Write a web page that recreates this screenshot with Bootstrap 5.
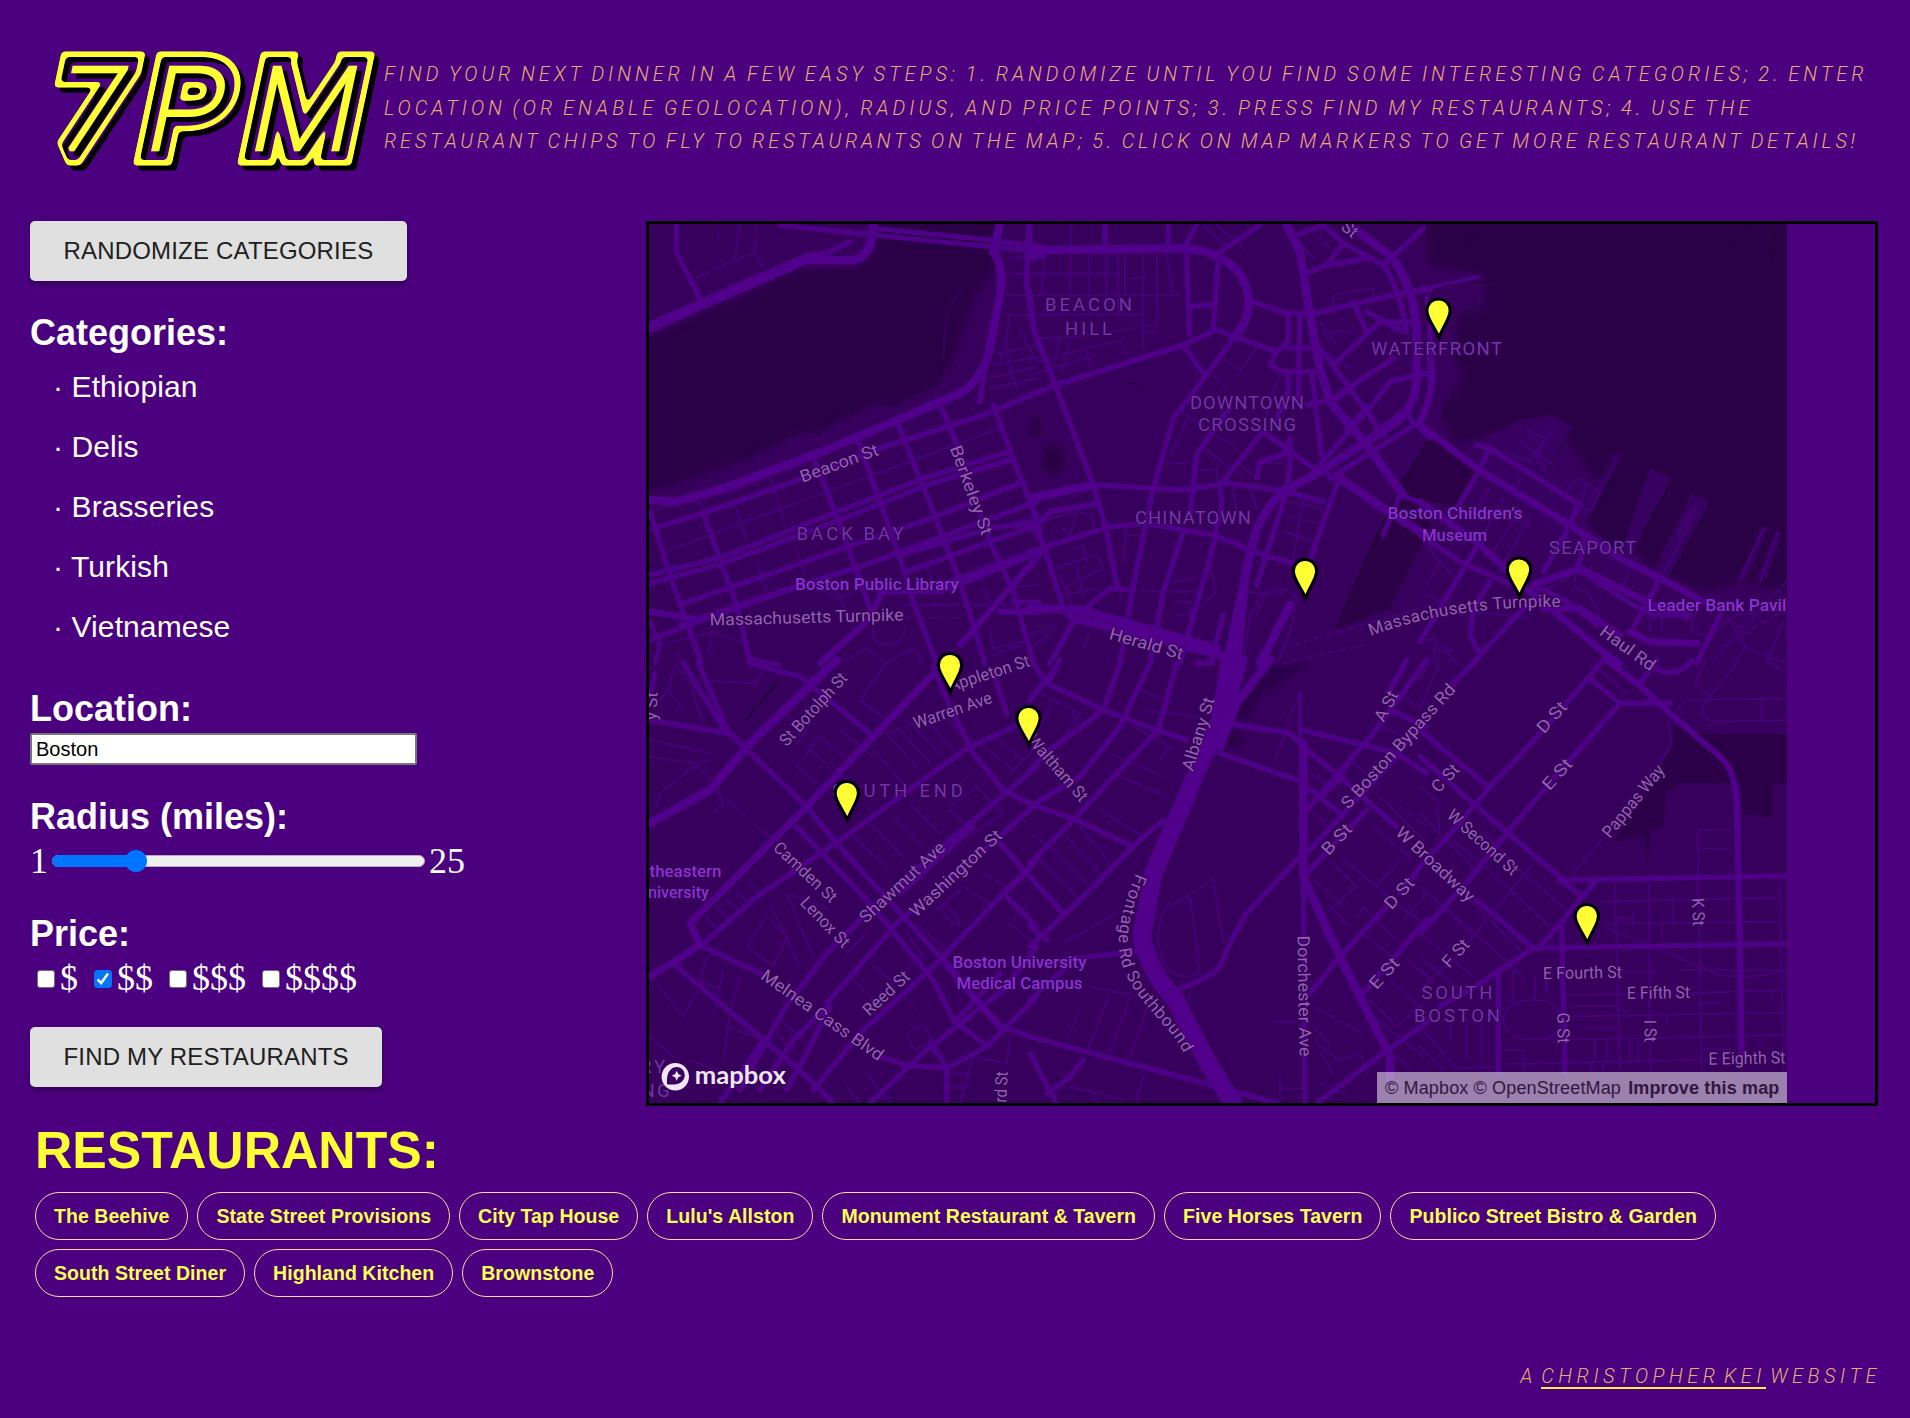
<!DOCTYPE html>
<html lang="en">
<head>
<meta charset="utf-8">
<meta name="viewport" content="width=device-width, initial-scale=1">
<title>7PM</title>
<link href="https://cdn.jsdelivr.net/npm/bootstrap@5.3.0/dist/css/bootstrap.min.css" rel="stylesheet">
<style>
body{background:#4b007f;color:#fff;font-family:"Liberation Sans",Arial,sans-serif;min-height:1418px;overflow-x:hidden}
.topbar{height:221px;padding:30px 30px 0 34px}
.logo7{width:350px;height:150px;flex:none}
.intro{padding-top:28px;font:italic 300 20px/33.5px Roboto,sans-serif;color:#e3ae76;white-space:nowrap;text-transform:uppercase;word-spacing:-2px}
.l1{letter-spacing:3.93px}.l2{letter-spacing:3.99px}.l3{letter-spacing:3.74px}
.main-row{padding:0 32px 0 30px;height:885px}
.side{width:616px;flex:none}
.btn-mui{--bs-btn-bg:#e0e0e0;--bs-btn-color:#212121;--bs-btn-hover-bg:#d5d5d5;height:60px;border:0;border-radius:5px;padding:0 33.5px;font-size:24px;letter-spacing:.18px;line-height:60px;box-shadow:0 3px 6px rgba(0,0,0,.35);text-transform:uppercase;white-space:nowrap}
.side h2{font-size:36px;line-height:42px;font-weight:700;margin:0}
.cats{font-size:30px;line-height:60px;letter-spacing:.1px;padding-left:23px;margin:0}
.loc{width:387px;height:32px;border:2px solid #767676;border-radius:2px;background:#fff;color:#000;font-size:20px;padding:0 4px}
.serif{font-family:"Liberation Serif","Times New Roman",serif;font-size:36px;line-height:42px}
.slider{width:373px;height:22px;margin:0 4px}
.box{appearance:none;width:18px;height:18px;border:1.5px solid #767676;border-radius:3px;background:#fff;margin:2px 5px 0 0;flex:none}
.box:checked{background:#0075ff;border-color:#0075ff;background-image:url("data:image/svg+xml,%3Csvg xmlns='http://www.w3.org/2000/svg' viewBox='0 0 18 18'%3E%3Cpath d='M3.6 9.5 7.2 13 14 3.6' fill='none' stroke='white' stroke-width='2.5'/%3E%3C/svg%3E");background-size:18px;background-position:center}
.mapframe{width:1232px;height:885px;border:3px solid #000;flex:none}
.mapframe svg{display:block}
.attrib{right:88px;bottom:0;height:31px;width:410px;background:rgba(255,255,255,.5);color:#30173f;font-size:18px;letter-spacing:.14px;line-height:32px;padding-left:8px;white-space:nowrap}
.rest{padding:0 35px}
.rest h1{font-size:51.7px;line-height:60px;font-weight:700;color:#ff3;margin:14px 0 12px 0}
.chips{gap:9px}
.chip7{height:48px;border:1px solid #ffd79b;border-radius:24px;padding:0 18px;font-size:19.5px;letter-spacing:.05px;line-height:46px;font-weight:700;color:#ffff52;white-space:nowrap}
.foot{padding:63px 29px 0 0;font:italic 300 20px/33px Roboto,sans-serif;color:#e3ae76;letter-spacing:4.5px;word-spacing:-5px;text-transform:uppercase}
.foot a{color:inherit;text-decoration:none;border-bottom:2px solid #ffef45;display:inline-block;line-height:22px}
.road path{fill:none;stroke-linejoin:round;stroke-linecap:round}
.road .w1{stroke:#50008a;stroke-width:25}
.road .w2{stroke:#4f0088;stroke-width:15}
.road .w3{stroke:#47007b;stroke-width:5}
.water path{fill:#2b0047}
.land path{fill:#380060}
.edge path{fill:none;stroke:#1c0033;stroke-width:3}
.lb{font-family:Roboto,sans-serif;paint-order:stroke;stroke:#30004f;stroke-width:1.5px;stroke-linejoin:round}
.st{fill:#9560b6;font-size:17px}.ar{fill:#7433ac;font-size:18.5px}.poi{fill:#8b30d6;font-size:17px;font-weight:500}
</style>
<script src="https://cdn.jsdelivr.net/npm/bootstrap@5.3.0/dist/js/bootstrap.bundle.min.js"></script>
</head>
<body>
<header class="topbar d-flex">
  <svg class="logo7" viewBox="34 30 350 150" role="img" aria-label="7PM">
    <defs>
      <!-- blur then sharpen: rounds the mitred corners of the tubes -->
      <filter id="round" filterUnits="userSpaceOnUse" x="20" y="20" width="380" height="170" color-interpolation-filters="sRGB"><feGaussianBlur stdDeviation="2"/><feComponentTransfer><feFuncA type="linear" slope="7" intercept="-3"/></feComponentTransfer></filter>
      <g id="word" font-family="Roboto" font-weight="100" font-size="114" stroke-linejoin="miter">
        <text transform="translate(53 148.5) skewX(-12)" textLength="62" lengthAdjust="spacingAndGlyphs" stroke-miterlimit="1.8">7</text>
        <text transform="translate(142 148.5) skewX(-12)" textLength="74" lengthAdjust="spacingAndGlyphs" stroke-miterlimit="2.1">P</text>
        <text transform="translate(246 148.5) skewX(-12)" textLength="103" lengthAdjust="spacingAndGlyphs" stroke-miterlimit="1.6">M</text>
      </g>
      <mask id="neon" maskUnits="userSpaceOnUse" x="30" y="30" width="360" height="150">
        <g filter="url(#round)"><use href="#word" fill="#fff" stroke="#fff" stroke-width="33"/></g>
        <g filter="url(#round)"><use href="#word" fill="#000" stroke="#000" stroke-width="22"/></g>
        <use href="#word" fill="#fff" stroke="#fff" stroke-width="4.5"/>
      </mask>
    </defs>
    <g style="filter:drop-shadow(5px 5px 0 #000)"><rect x="34" y="30" width="350" height="150" fill="#ff3" mask="url(#neon)"/></g>
  </svg>
  <div class="intro">
    <div class="l1">Find your next dinner in a few easy steps: 1. Randomize until you find some interesting categories; 2. Enter</div>
    <div class="l2">location (or enable geolocation), radius, and price points; 3. Press find my restaurants; 4. Use the</div>
    <div class="l3">restaurant chips to fly to restaurants on the map; 5. Click on map markers to get more restaurant details!</div>
  </div>
</header>

<main class="main-row d-flex">
  <section class="side d-flex flex-column align-items-start">
    <button class="btn btn-mui">Randomize categories</button>
    <h2 style="margin-top:31px">Categories:</h2>
    <ul class="cats list-unstyled" style="margin-top:3px">
      <li>· Ethiopian</li><li>· Delis</li><li>· Brasseries</li><li>· Turkish</li><li>· Vietnamese</li>
    </ul>
    <h2 style="margin-top:31px">Location:</h2>
    <input class="loc" value="Boston" style="margin-top:3px">
    <h2 style="margin-top:31px">Radius (miles):</h2>
    <div class="serif d-flex align-items-center" style="margin-top:2px"><span>1</span>
      <svg class="slider" viewBox="0 0 373 22"><rect x=".5" y="5.5" width="372" height="11" rx="5.5" fill="#efefef" stroke="#b9a6c8"/><path d="M6 5h78v12H6A6 6 0 0 1 6 5" fill="#0075ff"/><circle cx="84" cy="11" r="11" fill="#0075ff"/></svg>
      <span>25</span></div>
    <h2 style="margin-top:31px">Price:</h2>
    <div class="serif d-flex align-items-center" style="margin-top:2px;padding-left:7px;gap:16px">
      <label class="d-flex align-items-center"><input type="checkbox" class="box">$</label>
      <label class="d-flex align-items-center"><input type="checkbox" class="box" checked>$$</label>
      <label class="d-flex align-items-center"><input type="checkbox" class="box">$$$</label>
      <label class="d-flex align-items-center"><input type="checkbox" class="box">$$$$</label>
    </div>
    <button class="btn btn-mui" style="margin-top:28px">Find my restaurants</button>
  </section>

  <section class="mapframe position-relative">
    <svg width="1138" height="879" viewBox="649 224 1138 879">
      <defs><filter id="soft"><feGaussianBlur stdDeviation="9"/></filter>
      <path id="pike" d="M1371 636Q1450 606 1561 607"/><path id="front" d="M1136 873C1113 930 1113 960 1137 993S1174 1030 1187 1060"/></defs>
      <rect x="649" y="224" width="1138" height="879" fill="#38005d"/>
      <g transform="translate(640 215) scale(.33333)">
        <g class="water" filter="url(#soft)"><path d="M10 375 480 165 650 160 715 110 700 0H1070V150L1000 260 940 435 900 500 760 570 700 565 540 650 490 645 330 730 10 840Z"/></g>
        <g class="edge"><path d="M325 740 335 705 490 648 540 655 575 610 700 565 750 570 895 505 905 455 940 435"/></g>
      </g>
      <g transform="translate(1420 215) scale(.33333)">
        <g class="water" filter="url(#soft)"><path d="M20 0H1120V1130L960 1100 860 1130 740 1080 500 950 530 800 400 610 200 660 110 690 60 600 130 480 100 430 110 300 190 290 200 180 20 150Z"/></g>
        <g class="water"><path d="M0 715 30 660 170 760 110 880 0 850Z"/></g>
        <g class="land"><path d="M200 670 300 615 400 600 460 640 375 780 545 830 610 720 580 720 500 925 600 1020 690 760 755 790 640 1010 700 1070 815 835 870 860 745 1090 600 1080 400 960 180 760Z"/><path d="M530 800 610 720 498 930ZM950 1100 1030 930 1045 940 980 1090ZM1010 1090 1070 945 1085 955 1040 1090Z"/></g>
        <g class="edge"><path d="M455 640 378 780M610 722 500 925M755 792 660 970M870 860 748 1090M980 27 945 85M1063 27 1057 160M100 530 60 615M20 675 0 725M200 27 165 70 115 85M170 240V285L125 290M225 198 150 205"/></g>
      </g>
      <g transform="translate(1030 215) scale(.33333)">
        <g class="water"><path d="M1200 665 1120 790 1000 1040 915 1245 1080 1180 1200 940Z"/></g>
        <g class="edge"><path d="M1195 670 1130 790 1000 1050 915 1245M250 525Q290 490 345 512M0 600Q35 600 30 640M35 685 50 720 35 770"/></g>
        <g fill="#290045" filter="url(#soft)"><ellipse cx="70" cy="735" rx="35" ry="45"/><ellipse cx="15" cy="640" rx="18" ry="35"/></g>
      </g>
      <g transform="translate(1420 660) scale(.33333)">
        <g class="water" opacity=".9"><path d="M755 200 860 222H1101V370L1060 375V475L970 460 960 370 780 370 740 400 730 500 690 510 685 625 672 530 580 545 720 320 755 260Z"/></g>
      </g>
      <g transform="translate(1030 660) scale(.33333)"><g fill="#2b0048" filter="url(#soft)"><path d="M600 165 720 20 850 10 700 100 650 180ZM580 220H640V260H580Z"/></g></g>

      <g class="road">
      <!-- north-west: river bank, Back Bay -->
      <g transform="translate(640 215) scale(.33333)">
        <path class="w3" d="M300 27 285 130M350 27 345 110 165 190M345 110 370 160M235 50V85M1110 130 1200 120M1110 175H1200M1100 240H1200M1095 300H1200M1110 300 1095 400 1130 525M1075 415 1190 390M1060 450 1190 425M1050 490 1190 455M1050 520 1190 490M1085 410V450M1140 345 1190 440"/>
        <path d="M965 225 930 270 915 330 910 430" stroke="#35005a" stroke-width="6"/>
        <path class="w3" d="M45 885 270 830M85 1005 1080 640M285 870 320 975M175 860 195 895M390 780 435 930M350 1040 380 1130M465 990 495 1080M270 830 550 720M530 1120 600 1150 720 1090M590 1130 640 1230M205 1310 220 1250 60 1290M110 1310 130 1345M220 1250 330 1290M700 1240Q690 1285 740 1290 800 1280 795 1235M790 1170H1190M600 1345 680 1300 740 1345 820 1300 850 1345M860 1060 880 1110M1030 1120 1060 1180M1050 1240 1060 1300 1150 1280M1000 1060 1190 1000M1060 940 1190 900M1090 1120 1190 1110M1060 1320 1140 1290M700 780 1080 640"/>
        <path class="w3" stroke-dasharray="20 14" d="M800 1208H960M840 1168H1100"/>
        <path class="w1" style="stroke-width:32" d="M0 350 180 270 490 135"/>
        <path class="w1" d="M490 135 640 135Q690 125 695 60L700 30M1080 27 1060 110Q1095 160 1080 240L1045 420Q1020 500 960 535L560 705 250 820 110 860 30 855"/>
        <path class="w2" d="M420 30 700 60 1200 110M700 40 1050 75 1200 95M500 120 560 115 630 80M1165 30 1160 200 1175 320 1200 400M110 30 108 110 180 250M40 940 190 895 560 765 720 700 1030 600 1200 530M1040 420 1020 560M1060 570 1130 760 1200 930M30 1080 250 1025 580 895 850 790 1110 710M30 1105 250 1045 600 915 860 810 1110 735M130 1165 380 1080 640 990 900 900 1150 800M120 1230 420 1130 660 1055 920 960 1190 860M30 1275 200 1210 460 1120M780 1020 1050 940 1200 920M800 1070 1190 930M900 1110 1190 1010M720 1130 900 1130 1180 1020M30 890 100 1110 185 1345M190 895 290 1170 330 1340M525 740 600 930 690 1180M655 680 720 860 790 1060 820 1160 890 1345M775 630 880 890 960 1100 1035 1345M905 580 940 660 1050 980 1120 1130 1180 1345"/>
        <path class="w1" d="M30 1190 160 1210M540 1345 680 1220 730 1130M960 1290 1180 1040M1080 1190H1200" style="stroke-width:18"/>
        <path class="w2" d="M30 1220 60 1290 45 1345M330 1330 420 1350M1120 1160H1200" style="stroke-width:12"/>
      </g>
      <!-- Beacon Hill, Downtown, Chinatown -->
      <g transform="translate(1030 215) scale(.33333)">
        <path class="w3" d="M125 27 120 240M45 115 35 240M175 115V300M230 115V240M265 115V300M285 115V240M340 115V400M380 115 382 330M410 115 430 240M30 175H270M30 240H450M15 298H340M300 190H345M240 350 380 330M20 440 270 375M0 480 200 420M30 370 200 360M170 410 185 460M270 375 300 440M340 350H380M90 370 60 490M120 380 95 470M520 30 590 90M560 30 640 100M800 70 850 130M860 60 900 100M910 240 1030 220V270M910 240V280M880 350 960 350 1000 380M870 320 920 390M900 420 960 460M1000 290 1100 350M580 430 630 465 680 400M450 590 530 640 620 700M410 740 470 620M415 745H480M500 765H560V800M530 705 640 790M680 745H760M620 740 680 790M610 820 620 880M660 820 680 880M30 920 140 890 190 900V940M100 940 120 960 140 900M290 930 280 1040M280 960H330M130 1000 160 990 170 1040M70 1060 200 1020 220 1060 100 1120M90 1080 130 1180M140 1050 160 1150M100 1140 200 1120M780 860 880 880M770 900 880 930M760 950 850 980M820 850 790 1030M430 1100 500 1090M420 1130 490 1130M430 1160H480V1200H440M540 1050 560 1130 520 1170M0 1300 80 1240M0 1260 70 1230M180 1250 160 1300M550 480 590 520M750 480 720 550 700 640M330 1130H400M640 1345 660 1200 690 1150M690 1140Q760 1100 800 1150 790 1250 740 1345M680 1200 700 1150M640 1100 650 1130 760 1140"/>
        <path class="w3" stroke-dasharray="20 14" d="M790 1290 1200 1170M760 1345 1000 1290"/>
        <path class="w1" d="M0 95 60 105 460 100Q560 105 620 165 680 240 640 330L610 370M0 125 40 115M770 30 810 110 840 300 870 460 900 560 1010 690 1120 840M970 40 1080 120Q1150 210 1160 340V500Q1150 580 1100 620L870 770 760 830"/>
        <path class="w1" d="M0 850 190 810M0 1180 150 1185 560 1300M130 1210 570 1320M930 790 1060 880 1200 970M760 830Q680 900 660 1020L590 1345M650 1050 620 1345M780 1170 690 1345"/>
        <path class="w2" d="M0 95V30M225 30V100M415 30V100M470 85 500 30M470 115 478 360M565 130 550 340M478 275 550 268M570 110 690 30M800 60 880 30M880 30 940 85 890 150 830 175M900 150 1010 130M940 85 1060 150Q1110 220 1130 350M1060 150 1180 40M0 230 10 340 80 520 190 810 230 950 260 1110M0 540 80 510 460 390 560 345 740 410 720 450 760 470H870M460 390 520 475M610 370 500 520 430 610 370 820 320 1060 270 1345M665 260 770 295H850L1110 235 1200 225M775 300V380L740 410M810 300 805 550M770 400H870M775 470V530L740 610M845 470 860 600 875 720M870 400 960 520 1060 660M910 450 1040 330M970 260 1010 350M1010 290 1120 350M1050 320H1150M830 570 900 555 1090 430M910 560 1010 480M1190 475 1080 500 1010 590 860 760M950 640 1000 590M1120 590 880 770 930 800M1170 620 1040 700 900 790M1000 570 1060 660M1130 600 1200 670M690 660 570 810M600 580 540 660 500 720 480 900M780 670 760 720 690 740 680 790M700 650 850 760M780 680V760L765 830M200 810 460 825 590 805 750 825 880 860M0 850 30 960 100 1180 130 1220 60 1345M30 920 60 890 210 865M0 1010 240 935 340 925 550 960 700 1020 810 1050M460 950 400 1130 360 1345M555 975 450 1345M570 820 575 870 555 960M770 830 680 1110M920 810 820 1090M1110 835 1200 880M1110 840 1060 960M130 1210 240 1120 310 1125M0 1060 40 1000M580 1200 540 1345M0 930 50 1000"/>
      </g>
      <!-- harbour and Seaport -->
      <g transform="translate(1420 215) scale(.33333)">
        <path class="w3" d="M320 645 375 670 330 740 275 720M300 680 400 750M400 640 350 720 380 780M440 830 470 790 540 830 510 890 470 870M500 810 480 870M300 790 290 820M210 820 160 900M250 850 180 980M300 880 220 1010M330 900 240 1070M270 910 330 930M830 880 730 1080M10 980 60 1040 20 1110M60 1040 110 1090M0 1130 60 1160M560 1060 530 1120M630 1060 600 1130M470 1060Q450 1130 500 1130L540 1200M690 1210V1250M725 1210V1250M830 1190Q790 1250 850 1260M920 1200 980 1300 1100 1345M980 1290 940 1345M1090 1220 1040 1345M0 1280 50 1270 40 1345M60 1290 110 1345M30 1300 100 1310M80 1180 150 1210M160 1190 330 1210M0 470H30M1030 940 960 1090M1075 950 1020 1100M820 880 770 960M350 1130Q430 1110 450 1080M880 1250 950 1200 1100 1180"/>
        <path class="w3" stroke-dasharray="20 14" d="M1100 1100 870 1345M1100 1180 900 1300M830 1170 1000 1260"/>
        <path class="w1" style="stroke-width:20" d="M30 430Q50 520 0 620M0 630 170 760 450 930 600 1030 740 1100 850 1160M340 1110 480 1060 700 1170 800 1205M630 1250 690 1280 830 1285M0 860 180 990 330 1130 560 1320 600 1345M370 1180 480 1180 600 1260"/>
        <path class="w2" d="M170 690 210 700 480 870 440 940M210 700 175 770 110 880M0 960 120 1040 300 1120M180 980 0 1280M210 1100 160 1180 150 1260 180 1320 160 1345M340 1150 180 1320M440 950 370 1070M500 960 470 1070M600 1030 720 1090 640 1240M470 1060 640 1170 700 1200H810M640 1240 700 1130M900 1200 830 1345M350 1120Q430 1140 530 1230M30 300V430M0 470 30 480"/>
        <path class="w2" style="stroke-width:9" d="M0 220 20 220 175 185M20 240V300"/>
      </g>
      <!-- South End, Roxbury -->
      <g transform="translate(640 660) scale(.33333)">
        <path class="w3" d="M100 30 85 90 130 150M150 70 190 195M30 240 210 280M30 290 160 310 225 370M50 440 60 400 160 320 210 300M225 370 250 430 220 460M260 420 320 470M340 490 400 540M100 10 140 60 360 70M90 80 60 120M380 10 340 80M430 160 500 210 470 250M540 230 470 320 530 370M540 230 640 310M600 210 700 290M510 270 560 310M660 120 700 60 740 10M660 120 740 180M700 270 790 370M740 220 840 330M780 210 870 310M820 200 910 290M860 180 940 270M900 160 960 210M740 220 900 160M580 320 640 380M690 490 790 590M640 530 740 620M760 470 850 560M810 430 900 520M930 440 1010 380 1090 460 1000 520 930 450M950 380 1000 330M1020 250 1120 330M1060 230 1150 300M1100 500 1170 460M440 700 520 890M390 730 480 920M440 700 570 750M380 770 320 860 400 920 440 830 390 780M200 770 240 820M230 740 280 790M260 720 310 760M290 690 340 740M320 660 370 710M200 890 180 960 240 990M250 930 220 1060M50 970 130 1070 190 960M300 950 270 1060 250 1200M270 1100 340 1130M680 820 620 880M800 820 860 900M840 800 930 880M900 740Q930 720 960 790 940 810 900 740M970 680 1060 740M1030 640 1130 700M1110 790 1180 850M800 1120 850 1090 880 1150 820 1170ZM640 960 700 1020M700 920 780 980M780 1000 830 1050M420 1080 500 1150M400 1110 470 1180M1000 1190 1100 1210 1110 1130M930 1240H990M930 1280H980M1000 1190 960 1330M680 1240 750 1330M620 1280 660 1330M30 1130 100 1190M150 1200 250 1240M890 750 960 690M1120 780 1170 720M1190 260 1110 340M850 880 740 990"/>
        <path class="w2" d="M130 10 260 220M175 10 265 215 500 440 590 550 790 770 900 890 1080 1100 1190 1135M30 180 260 220M30 110 45 40M330 10 480 50 690 220M1190 170 980 265 780 410 600 540 350 710 190 850M1190 320 930 540 700 740M1190 430 1000 600 770 790 560 1030M1190 600 1090 700 890 910 660 1120 520 1290M700 740 560 880 430 1050 300 1290M570 1040 500 1180 440 1290M880 20 930 140 1000 280 1090 390 1190 440M1060 40 1100 160M470 500 680 720 880 960 940 1080 1030 1150M1080 550 1160 640 1090 700 1190 800M1190 590 1160 640M110 920 360 1130 500 1250 580 1330M190 860 370 945M720 1190 800 1215 920 1225 1040 1160 1190 1010M690 1330 860 1170 1090 990 1190 860M870 1150 920 1220V1330M950 1080 1080 940M780 700 1000 500M370 1140 240 1330M560 1040 460 1140 360 1290"/>
        <path class="w1" style="stroke-width:20" d="M900 20 700 230 500 440 150 790 180 855 30 950M900 890 1000 1010 1080 1100M170 860 100 910"/>
        <path class="w1" d="M590 0 330 250 210 390 20 495"/>
      </g>
      <g class="edge" transform="translate(640 660) scale(.33333)"><path style="opacity:.7;stroke-width:8" d="M410 70 315 180"/></g>
      <!-- expressway, South Boston west -->
      <g transform="translate(1030 660) scale(.33333)">
        <path class="w3" d="M30 100 150 160 90 250M60 140 20 220M130 160 160 230M330 90 420 130M340 150 500 170M310 200 420 260 390 300M240 280 400 350M230 330 410 410M210 450 340 530M150 500 240 610M110 530 210 640M70 570 170 670M30 600 140 710M0 520 70 570M400 750 470 710 550 655 580 850M480 710 510 940Q430 970 400 900 370 830 400 750M100 850 260 760M180 980 380 1020M240 1000 170 1180M300 1010 235 1190M360 1020 300 1190M150 1050 110 1140M480 1000 460 1070M730 1085H800M750 1250V1325M750 1285H820M340 1250 320 1320M180 1290 200 1330M120 1280 280 1320M90 1240 130 1260M770 180 810 100M780 190 730 310M840 340 900 380M850 460 900 500M900 740 960 800M900 750 980 680 900 600M850 660 940 740M980 770 1000 740 1100 840M940 600 1040 680 1110 600M1030 500 1150 600M1050 690 1190 800M1010 830 1100 900M960 300 1050 380M1100 100 1160 140M1060 200 1120 230M900 370 960 320M850 1040 1000 1120M850 1100 900 1150M860 1150 930 1200M870 1180 910 1240M930 1200 990 1180 1010 1240M1020 1020 1100 1100 1180 1030M1040 1080 1180 1190M1080 960 1190 1060M1130 900 1190 950M1070 1170 1140 1220M870 1270 950 1300M1120 780 1190 700M1110 440 1190 500M1040 400 1180 540"/>
        <path class="w2" d="M10 10 50 70 220 150 380 210 470 240M60 60 90 0M270 10 220 150 60 270 0 330M360 10 270 200 150 350 0 440M440 10 385 210 250 350 120 490 0 610M0 430 140 480 310 560 400 480M310 560 170 700 0 860M0 650 100 760M80 20 0 120M550 10 500 10M590 190 780 220 820 260M570 280 800 360M820 210 1100 280 1190 340M830 270 930 350 1100 500M830 380 930 460M1190 0 1030 220 830 450M1130 0 1080 90M1190 170 1090 300 830 580M1080 150 1190 200M940 350 870 410M1010 450 830 640M810 590 650 760Q600 840 570 920 520 970 400 1000M100 900 270 880 340 870M0 1020 100 930M0 1130 300 1210 600 1290 740 1330M0 1180 80 1330M160 1200 110 1260 50 1300M1070 740 930 890 840 1000M1190 780 990 1010M820 640 825 1330M1200 1080 1060 1180 860 1330M1180 610 1110 700M0 800 50 840"/>
        <path class="w2" style="stroke-width:8" d="M810 100V260"/>
        <path class="w1" d="M820 250V650Q850 720 930 890L1080 1190 1080 1260"/>
        <path class="w1" style="stroke-width:54" d="M600 0 570 180 460 430 370 640 335 830Q360 940 430 1010L540 1220 610 1330"/>
        <path class="w1" d="M720 0 620 130 570 260M640 0 590 180"/>
        <path d="M545 290 470 480M495 200 430 440" stroke="#3d0066" stroke-width="3"/>
      </g>
      <!-- South Boston -->
      <g transform="translate(1420 660) scale(.33333)">
        <path class="w3" d="M860 0 825 70 870 110 950 10M1040 0 1100 40M870 110 850 135Q840 180 890 185L1100 180M770 150 800 120 1100 115M1025 120V180M540 30 620 100 610 110M745 180 755 250 720 310M545 540 460 640M835 650V510H935M845 565H935M550 725 1080 712M560 792 1080 785M600 935H710M780 930H1100M440 1005 600 1003 1100 992M450 1038H600M430 1070 1100 1058M500 1103H600M370 1140 1100 1125M260 1212 900 1198M585 670 600 1230M685 670 692 1230M835 660 845 1230M1080 660 1090 1230M760 720V785M640 760V790M725 790V830M590 775H640M550 800 720 870 900 945Q1000 960 1100 930M525 1140V1200M560 1140V1200M630 1140V1200M655 1140V1200M740 1070V1090M610 1050 630 1060M840 1028H900M1055 990V1020M1025 1130V1150M850 1165 930 1170M515 1210V1235M550 1210V1235M250 1170H310V1235M280 920V1020M345 945V1020M380 940V1000M250 1080Q260 1020 340 1020T420 1080 340 1140 250 1080M140 1080V1200M185 1080V1210M90 1090V1140M0 1100 110 1225 240 1220M0 1160 70 1230M340 610 200 780 100 900 0 990M100 540 250 670 390 800M190 520 310 640 440 750M0 560 150 720 310 880M0 680 200 850 300 940 310 960M0 380 50 420 60 520 180 640M0 460 60 520M0 820 160 950M0 890 130 1000M60 730 150 820M0 150 60 0M0 60 30 0M0 930 40 960"/>
        <path class="w2" d="M550 0 380 200 210 380 110 500 0 620M510 55 600 130 750 130M600 130 450 300 260 520 130 680 0 820M0 210 210 385M0 290 160 430 430 660 1101 648M420 660 490 710M530 660 480 720 360 860M170 720 340 865 1101 852M340 865 180 970 60 1040M425 790 435 1240M235 930V1240M710 0 660 70M690 10Q740 60 800 20L815 0M170 0 90 80"/>
        <path class="w1" style="stroke-width:18" d="M560 0 650 70 750 160 900 290Q945 330 950 420L960 850 965 1180"/>
      </g>
      </g>
      <g id="labels"></g>
      <text class="lb st"><textPath href="#pike" textLength="193">Massachusetts Turnpike</textPath></text>
      <text class="lb st"><textPath href="#front" textLength="203">Frontage Rd Southbound</textPath></text>
      <g id="pins"></g>
      <g transform="translate(675.3 1076.7)" fill="#f1e6f6">
        <circle r="13.7"/><path d="M-8.3 7.5Q-9-2-5.5-6.3A8.3 8.3 0 1 1 6.2 5.2Q1 9-8.3 7.5Z" fill="#380060"/>
        <path d="M1.4-6 3-2.6 6.4-1 3 .6 1.4 4-.2.6-3.6-1-.2-2.6Z"/>
        <text x="19.5" y="7.3" font-family="Lato" font-weight="700" font-size="25" textLength="91" lengthAdjust="spacingAndGlyphs">mapbox</text>
      </g>
    </svg>
    <div class="attrib position-absolute">© Mapbox © OpenStreetMap <b style="margin-left:2px">Improve this map</b></div>
  </section>
</main>

<section class="rest">
  <h1>RESTAURANTS:</h1>
  <div class="chips d-flex flex-wrap">
    <span class="chip7">The Beehive</span><span class="chip7">State Street Provisions</span><span class="chip7">City Tap House</span><span class="chip7">Lulu's Allston</span><span class="chip7">Monument Restaurant &amp; Tavern</span><span class="chip7">Five Horses Tavern</span><span class="chip7">Publico Street Bistro &amp; Garden</span><span class="chip7">South Street Diner</span><span class="chip7">Highland Kitchen</span><span class="chip7">Brownstone</span>
  </div>
</section>
<footer class="foot text-end">A <a href="#">Christopher Kei</a> website</footer>

<script>
// text, centre x, centre y, rotation, drawn length, class
const labels=[
['BACK BAY',850,534,0,107,'ar'],['BEACON',1088.5,305,0,87,'ar'],['HILL',1088.5,328.5,0,47,'ar'],['DOWNTOWN',1247,402.5,0,114,'ar'],['CROSSING',1247,425,0,98,'ar'],['CHINATOWN',1193,517.5,0,116,'ar'],['WATERFRONT',1436.5,348.5,0,131,'ar'],['SEAPORT',1592.5,548,0,87,'ar'],['SOUTH END',897.5,790.5,0,131,'ar'],['SOUTH',1457,992.5,0,71,'ar'],['BOSTON',1457,1016,0,86,'ar'],['RY',652.5,1067,0,25,'ar'],['NG',655.5,1091,0,28,'ar'],
['Boston Public Library',877,584,0,164,'poi'],['Boston Children’s',1455,513,0,135,'poi'],['Museum',1454.5,534.5,0,65,'poi'],['Leader Bank Pavil',1717,605,0,139,'poi'],['theastern',685.5,871,0,72,'poi'],['niversity',678.5,892,0,61,'poi'],['Boston University',1019.5,961.5,0,134,'poi'],['Medical Campus',1019.5,983,0,126,'poi'],
['Massachusetts Turnpike',806.5,617,-1.5,194,'st'],['Beacon St',839,463,-20,82,'st'],['Berkeley St',971.5,490,70,94,'st'],['Herald St',1146.5,643.5,16,76,'st'],['St',1350,229,40,16,'st'],['Haul Rd',1628,648,36,64,'st'],['Appleton St',989,673,-18,84,'st'],['Warren Ave',952.5,710,-19,82,'st'],['St Botolph St',813,709,-48,92,'st'],['Waltham St',1058,768,49,82,'st'],['Albany St',1198,734,-73,76,'st'],['Camden St',805.5,872,43,80,'st'],['Lenox St',825.5,922,46,63,'st'],['Shawmut Ave',902,882,-43,110,'st'],['Washington St',955.5,873,-43,119,'st'],['Melnea Cass Blvd',822.5,1015,35,145,'st'],['Reed St',886,993,-43,57,'st'],['rd St',1001,1087,-87,31,'st'],['y St',651,706,-88,28,'st'],['Dorchester Ave',1304.5,996,89,121,'st'],['A St',1386,706,-62,32,'st'],['S Boston Bypass Rd',1398,746,-48,161,'st'],['B St',1336.5,839,-47,36,'st'],['D St',1399,893,-48,36,'st'],['E St',1384,973,-48,36,'st'],['W Broadway',1435.5,864,43,101,'st'],['W Second St',1483,842,42,89,'st'],['C St',1445,778,-47,32,'st'],['D St',1551.5,717,-48,36,'st'],['E St',1557,774,-48,36,'st'],['Pappas Way',1633,801,-51,88,'st'],['F St',1455.5,953,-48,32,'st'],['K St',1698.5,912,88,28,'st'],['E Fourth St',1582.5,972.5,-1,79,'st'],['E Fifth St',1658.5,992.5,-1,63,'st'],['G St',1563.5,1028,89,31,'st'],['I St',1650.5,1031,89,22,'st'],['E Eighth St',1747,1058,-1,77,'st']];
document.getElementById('labels').innerHTML=labels.map(([t,x,y,r,w,c])=>`<text class="lb ${c}" transform="translate(${x} ${y}) rotate(${r})" x="${-w/2}" y="6" textLength="${w}" lengthAdjust="${c=='ar'?'spacing':'spacingAndGlyphs'}">${t}</text>`).join('');
const pins=[[1438.5,297.5],[1305,558],[1519,556.5],[950,652],[1028.5,705],[846.8,780],[1586.8,903]];
document.getElementById('pins').innerHTML=pins.map(([x,y])=>`<path transform="translate(${x} ${y})" fill="#ff3" stroke="#000" stroke-width="3.2" d="M0 1.5C-7 1.5-11.7 7-11.7 13-11.7 21-5 28 .6 40 5 28 11.7 21 11.7 13 11.7 7 7 1.5 0 1.5Z"/>`).join('');
</script>
</body>
</html>
